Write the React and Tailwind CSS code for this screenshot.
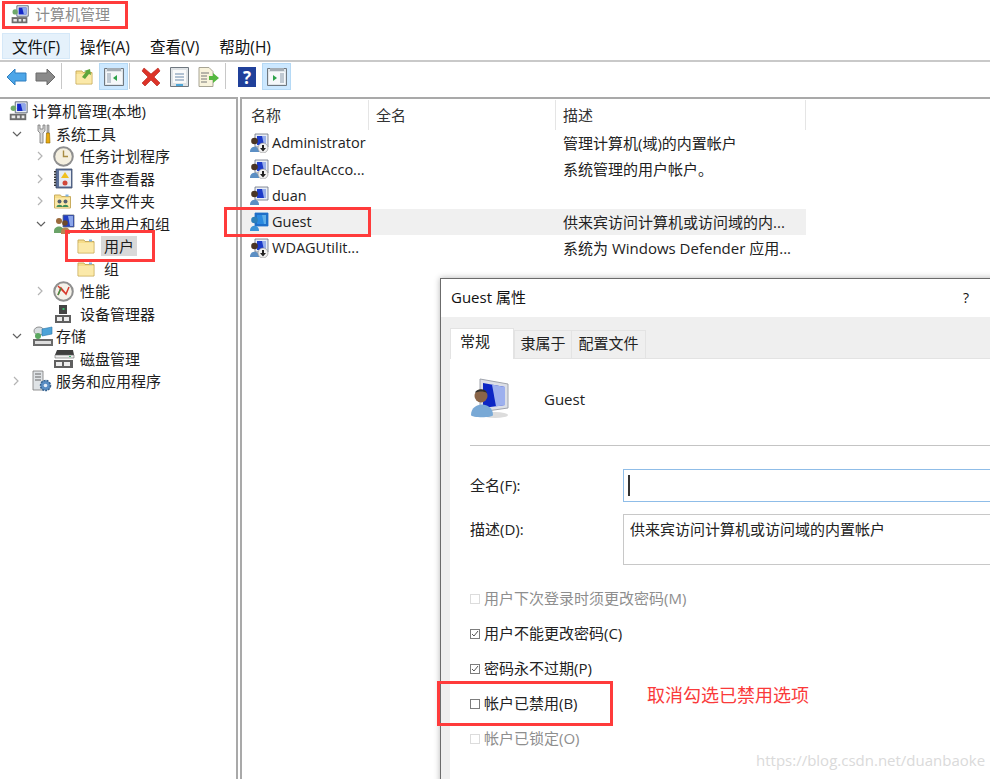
import React from "react";

const FONT = { fontFamily: '"Open Sans","Noto Sans CJK SC",sans-serif' };

function Computer({ size = 24, accent = "#1428c8" }) {
  return (
    <svg width={size} height={size} viewBox="0 0 24 24">
      <path d="M9 2h13v12H9z" fill="#e8edf5" stroke="#5a6472" strokeWidth="1" />
      <path d="M11 4h9v8h-9z" fill={accent} />
      <path d="M15 4h5v8h-3z" fill="#8fa8ea" />
      <circle cx="7" cy="9" r="3" fill="#6ea86a" />
      <path d="M3 15h18v7H3z" fill="#6d6d6d" />
      <path d="M5 17h4v3H5zM11 17h3v3h-3zM16 17h3v3h-3z" fill="#e8e8e8" />
    </svg>
  );
}
function Tools() {
  return (
    <svg width="22" height="22" viewBox="0 0 22 22">
      <path d="M6 2v6l2 2v10h3V10l2-2V2l-2 0v4H8V2z" fill="#d8d8d8" stroke="#777" strokeWidth="0.8" />
      <path d="M15 2h2v8h-2z" fill="#bbb" stroke="#777" strokeWidth="0.6" />
      <path d="M14.500 10h3l.5 10h-4z" fill="#e8a90e" stroke="#8a6400" strokeWidth="0.6" />
    </svg>
  );
}
function Clock() {
  return (
    <svg width="21" height="21" viewBox="0 0 21 21">
      <circle cx="10.500" cy="10.500" r="9.300" fill="#f4efdf" stroke="#8f8f8f" strokeWidth="2" />
      <path d="M10.500 4.500v6h4.500" fill="none" stroke="#a88c42" strokeWidth="1.400" />
    </svg>
  );
}
function LogBook() {
  return (
    <svg width="21" height="21" viewBox="0 0 21 21">
      <path d="M3 1h16v19H3z" fill="#5b6f98" stroke="#3e4c68" strokeWidth="0.8" />
      <path d="M6 2.500h12v16H6z" fill="#e6ebf3" />
      <path d="M2 3v15" stroke="#333" strokeWidth="2" strokeDasharray="1.500 1.200" />
      <path d="M12 4l4 6H8z" fill="#f0c020" />
      <circle cx="12" cy="15" r="2.500" fill="#d0473a" />
    </svg>
  );
}
function FolderSvg({ width = 18, share = false, tilt = false }) {
  return (
    <svg width={width} height="18" viewBox="0 0 18 18">
      <path d="M1 3h6l1 1.500h9V16H1z" fill="#f6dd8a" stroke="#c9ad5f" strokeWidth="1" />
      <path d="M1.500 6h15v9.500h-15z" fill="#fbe9a9" />
      <path d="M12 2.500h3v2h-3z" fill="#7fb2e0" />
      {share && (
        <g>
          <circle cx="6" cy="9.500" r="2" fill="#54606e" />
          <circle cx="12" cy="9.500" r="2" fill="#54606e" />
          <path d="M3 15c0-3 6-3 6 0zM9 15c0-3 6-3 6 0z" fill="#3f8d58" />
        </g>
      )}
      {tilt && <path d="M7 9l4-5-2-1 6-2 1 6-2-1-4 5z" fill="#5da53c" />}
    </svg>
  );
}
function Users() {
  return (
    <svg width="22" height="22" viewBox="0 0 22 22">
      <path d="M10 2h11v12H10z" fill="#223fc4" stroke="#66707c" strokeWidth="0.8" />
      <path d="M15 3h5v10h-3z" fill="#8ba6ea" />
      <circle cx="6" cy="8" r="3" fill="#9b6a3c" />
      <path d="M1 18c0-6 10-6 10 0v2H1z" fill="#6aa368" />
      <circle cx="12" cy="10" r="2.800" fill="#6d4a2a" />
      <path d="M8 19c0-6 9-6 9 0v2H8z" fill="#b9844e" />
    </svg>
  );
}
function Gauge() {
  return (
    <svg width="21" height="21" viewBox="0 0 21 21">
      <circle cx="10.500" cy="10.500" r="9.300" fill="#f4f2ea" stroke="#8f8f8f" strokeWidth="2" />
      <path d="M5 5l7 7M5 14l3-7 5 6 3-7" fill="none" stroke="#d8392c" strokeWidth="1.500" />
      <path d="M5 14l3-7" stroke="#3d9448" strokeWidth="1.500" />
    </svg>
  );
}
function Device() {
  return (
    <svg width="20" height="20" viewBox="0 0 20 20">
      <path d="M6 1h8v9H6z" fill="#444" />
      <path d="M9.500 4h2v2h-2z" fill="#38b86b" />
      <path d="M2 11h16v8H2z" fill="#5f5f5f" />
      <path d="M4 13h5v4H4zM11 13h5v4h-5z" fill="#ececec" />
    </svg>
  );
}
function Storage() {
  return (
    <svg width="22" height="22" viewBox="0 0 22 22">
      <ellipse cx="7" cy="6" rx="5" ry="4" fill="#d8dde0" stroke="#777" strokeWidth="0.8" />
      <path d="M10 4l10-2v7l-10 2z" fill="#4da3d8" stroke="#2c76a8" strokeWidth="0.6" />
      <circle cx="6" cy="11" r="3" fill="#5aa860" />
      <path d="M1 14h20v7H1z" fill="#6a6a6a" />
      <path d="M3 16h16v3H3z" fill="#dedede" />
    </svg>
  );
}
function Disk() {
  return (
    <svg width="22" height="20" viewBox="0 0 22 20">
      <path d="M4 1h16l1 5H2z" fill="#3f3f3f" />
      <path d="M2 6h19v3H2z" fill="#efefef" stroke="#666" strokeWidth="0.6" />
      <path d="M16 7h2v1h-2z" fill="#38b86b" />
      <path d="M1 11h19v8H1z" fill="#5f5f5f" />
      <path d="M3 13h6v4H3zM11 13h6v4h-6z" fill="#ececec" />
    </svg>
  );
}
function Services() {
  return (
    <svg width="20" height="22" viewBox="0 0 20 22">
      <path d="M1 1h10v19H1z" fill="#dfe3e6" stroke="#7a7a7a" strokeWidth="0.8" />
      <path d="M3 4h6M3 7h6M3 10h6" stroke="#666" strokeWidth="1.200" />
      <circle cx="13.500" cy="15.500" r="5" fill="#5a8ec4" stroke="#33618f" strokeWidth="1.500" strokeDasharray="2 1" />
      <circle cx="13.500" cy="15.500" r="1.800" fill="#e5eef7" />
    </svg>
  );
}
function ListUser({ blue = false, arrow = true }) {
  return (
    <svg width="20" height="20" viewBox="0 0 20 20">
      <path d="M6 1h13v13H6z" fill={blue ? "#1f6fc8" : "#e8edf5"} stroke={blue ? "#1f6fc8" : "#6b7280"} strokeWidth="0.8" />
      <path d="M8 3h9v9H8z" fill={blue ? "#2a8ae0" : "#1d3bc8"} />
      <path d="M13 3h4v9h-2z" fill={blue ? "#5eaee8" : "#9ab0ea"} />
      <circle cx="5.500" cy="8" r="3.300" fill={blue ? "#2d7fb8" : "#4a3524"} />
      <path d="M1 19c-.5-7 9.500-7 9 0z" fill={blue ? "#3c93d6" : "#5c8fc4"} />
      {arrow && (
        <g>
          <circle cx="14" cy="15" r="5" fill="#f0f0f0" stroke="#888" strokeWidth="0.6" />
          <path d="M13 12h2v3h2l-3 3.500L11 15h2z" fill="#222" />
        </g>
      )}
    </svg>
  );
}
function BigUser() {
  return (
    <svg width="42" height="42" viewBox="0 0 42 42">
      <path d="M10 1l28 5v24l-28 4z" fill="#dcdfe6" stroke="#a0a4ad" strokeWidth="1" />
      <path d="M13 5l22 4v18l-22 3z" fill="#0c26c4" />
      <path d="M22 6.500l13 2.500v18l-9 1.500z" fill="#9db0ee" />
      <ellipse cx="25" cy="37" rx="13" ry="3" fill="#dcdcdc" />
      <circle cx="11" cy="18" r="6.500" fill="#8a6548" />
      <path d="M5 15c1-5 11-5 12 0-3-2-9-2-12 0z" fill="#33322f" />
      <path d="M1 37c0-14 22-14 22 0 0 3-22 3-22 0z" fill="#79a9d6" />
    </svg>
  );
}
function ChevronRight() {
  return (
    <svg width="8" height="10" viewBox="0 0 8 10">
      <path d="M2 1l4 4-4 4" fill="none" stroke="#b4b4b4" strokeWidth="1.200" />
    </svg>
  );
}
function ChevronDown() {
  return (
    <svg width="10" height="8" viewBox="0 0 10 8">
      <path d="M1 2l4 4 4-4" fill="none" stroke="#606060" strokeWidth="1.200" />
    </svg>
  );
}

function ArrowIcon({ color, dark, flip }) {
  return (
    <svg width="21" height="18" viewBox="0 0 21 18" className={flip ? "-scale-x-100" : ""}>
      <path d="M1 9l8-8v4h11v8H9v4z" fill={color} stroke={dark} strokeWidth="1" />
    </svg>
  );
}
function PaneIcon({ right = false }) {
  return (
    <svg width="20" height="20" viewBox="0 0 20 20">
      <path d="M.5 1.500h19v17H.5z" fill="#dfe5ea" stroke="#6f7880" />
      <path d="M2 5h16v12H2z" fill="#f6f8fa" />
      <path d="M3 1h14v3H3z" fill="#a5adb4" />
      <path d={right ? "M13 6h4v10h-4z" : "M3 6h4v10H3z"} fill="#c0c9d2" />
      <path d={right ? "M6 8l4 3-4 3z" : "M13 8l-4 3 4 3z"} fill="#2da24a" />
    </svg>
  );
}

function TreeRow({ level, chevron, icon, label, selected }) {
  const levels = {
    0: "pl-[7px]",
    1: "pl-[11px]",
    2: "pl-[35px]",
    3: "pl-[77px]",
  };
  return (
    <div className={`flex h-[22.500px] items-center ${levels[level]}`}>
      {level > 0 && level < 3 && (
        <span className="flex w-[21px] shrink-0 items-center justify-start pl-[1px]">
          {chevron === "down" && <ChevronDown />}
          {chevron === "right" && <ChevronRight />}
        </span>
      )}
      <span className={`flex w-[24px] shrink-0 items-center ${level === 2 ? "-ml-[3px] mr-[3px]" : ""}`}>{icon}</span>
      <span className={`whitespace-nowrap text-[15px] leading-[20px] text-[#1e1e1e] ${level === 0 ? "pl-[1px]" : ""} ${selected ? "bg-[#d9d9d9] px-[3px]" : level === 3 ? "px-[3px]" : ""}`}>
        {label}
      </span>
    </div>
  );
}

const tree = [
  { level: 0, icon: <Computer size={22} />, label: "计算机管理(本地)" },
  { level: 1, chevron: "down", icon: <Tools />, label: "系统工具" },
  { level: 2, chevron: "right", icon: <Clock />, label: "任务计划程序" },
  { level: 2, chevron: "right", icon: <LogBook />, label: "事件查看器" },
  { level: 2, chevron: "right", icon: <FolderSvg width={19} share />, label: "共享文件夹" },
  { level: 2, chevron: "down", icon: <Users />, label: "本地用户和组" },
  { level: 3, icon: <FolderSvg />, label: "用户", selected: true },
  { level: 3, icon: <FolderSvg />, label: "组" },
  { level: 2, chevron: "right", icon: <Gauge />, label: "性能" },
  { level: 2, icon: <Device />, label: "设备管理器" },
  { level: 1, chevron: "down", icon: <Storage />, label: "存储" },
  { level: 2, icon: <Disk />, label: "磁盘管理" },
  { level: 1, chevron: "right", icon: <Services />, label: "服务和应用程序" },
];

const users = [
  { name: "Administrator", desc: "管理计算机(域)的内置帐户", arrow: true },
  { name: "DefaultAcco...", desc: "系统管理的用户帐户。", arrow: true },
  { name: "duan", desc: "", arrow: false },
  { name: "Guest", desc: "供来宾访问计算机或访问域的内...", selected: true },
  { name: "WDAGUtilit...", desc: "系统为 Windows Defender 应用...", arrow: true },
];

function Check({ state, label, disabled }) {
  return (
    <div className="flex h-[35px] items-center">
      <span className={`mr-[4px] flex h-[10px] w-[10px] items-center justify-center border ${disabled ? "border-[#dcdcdc]" : "border-[#7d7d7d]"}`}>
        {state && (
          <svg width="8" height="8" viewBox="0 0 8 8">
            <path d="M1 4l2 2 4-5" fill="none" stroke="#555" strokeWidth="1" />
          </svg>
        )}
      </span>
      <span className={`whitespace-nowrap text-[15px] ${disabled ? "text-[#8e8e8e]" : "text-[#222]"}`}>{label}</span>
    </div>
  );
}

export default function App() {
  return (
    <div className="relative h-[779px] w-[990px] overflow-hidden bg-white" style={FONT}>
      {/* title */}
      <div className="flex h-[33px] items-center pb-[4px] pl-[9px]">
        <Computer size={21} />
        <span className="ml-[5px] text-[15px] text-[#8c8c8c]">计算机管理</span>
      </div>
      {/* menu */}
      <div className="flex h-[29px] border-b-2 border-[#c9c9c9] pb-[1px] pl-[2px] text-[15.500px] text-[#111]">
        <div className="flex w-[68px] items-center justify-center border border-[#d5e8f8] bg-[#e5f1fb] pt-[3px]">文件(F)</div>
        <div className="ml-[10px] flex items-center pt-[3px]">操作(A)</div>
        <div className="ml-[20px] flex items-center pt-[3px]">查看(V)</div>
        <div className="ml-[20px] flex items-center pt-[3px]">帮助(H)</div>
      </div>
      {/* toolbar */}
      <div className="flex h-[35px] items-start pl-[6px] pt-[1px]">
        <div className="flex h-[28px] items-center"><ArrowIcon color="#4da6e8" dark="#2f7fc0" /></div>
        <div className="ml-[8px] flex h-[28px] items-center"><ArrowIcon color="#8a8a8a" dark="#6a6a6a" flip /></div>
        <div className="ml-[5px] h-[26px] w-px bg-[#c8c8c8]" />
        <div className="ml-[13px] flex h-[28px] items-center"><FolderSvg tilt /></div>
        <div className="ml-[6px] flex h-[27px] w-[29px] items-center justify-center border border-[#b5d9f5] bg-[#cce8ff]"><PaneIcon /></div>
        <div className="ml-[1px] h-[26px] w-px bg-[#c8c8c8]" />
        <div className="ml-[11px] flex h-[28px] items-center">
          <svg width="20" height="20" viewBox="0 0 20 20">
            <path d="M3 1l7 6 7-6 2 3-6 6 6 6-3 3-6-6-6 6-3-3 6-6-6-6z" fill="#dd3328" stroke="#b02018" strokeWidth="0.6" />
          </svg>
        </div>
        <div className="ml-[9px] flex h-[28px] items-center">
          <svg width="19" height="20" viewBox="0 0 19 20">
            <path d="M.5 .5h18v19H.5z" fill="#dfe3e6" stroke="#6f7880" />
            <path d="M3 3h13v13H3z" fill="#fafafa" />
            <path d="M5 7h9M5 10h9M5 13h9" stroke="#6a89aa" />
            <path d="M6 17h7v2H6z" fill="#4da6d8" />
          </svg>
        </div>
        <div className="ml-[9px] flex h-[28px] items-center">
          <svg width="21" height="20" viewBox="0 0 21 20">
            <path d="M1 .5h10l4 4v15H1z" fill="#f8f3dc" stroke="#a8a594" />
            <path d="M3 6h8M3 9h6M3 12h6M3 15h6" stroke="#777" />
            <path d="M11 9h4V6l6 5-6 5v-3h-4z" fill="#55b83f" />
          </svg>
        </div>
        <div className="ml-[6px] h-[26px] w-px bg-[#c8c8c8]" />
        <div className="ml-[12px] flex h-[28px] items-center">
          <span className="flex h-[20px] w-[18px] items-center justify-center bg-[#20409a] text-[17px] font-bold leading-none text-white">?</span>
        </div>
        <div className="ml-[6px] flex h-[27px] w-[29px] items-center justify-center border border-[#b5d9f5] bg-[#cce8ff]"><PaneIcon right /></div>
      </div>
      {/* panes */}
      <div className="flex h-[682px] gap-[2px]">
        <div className="h-full w-[238px] shrink-0 border-2 border-b-0 border-l-0 border-[#a9a9a9] pt-[1px]">
          {tree.map((t) => (
            <TreeRow key={t.label} {...t} />
          ))}
        </div>
        <div className="h-full flex-1 border-l-2 border-t-2 border-[#a9a9a9] pt-[1px]">
          <div className="flex h-[30px] w-[564px] text-[15px] text-[#333]">
            <div className="flex w-[127px] items-center border-r border-[#e5e5e5] pl-[9px]">名称</div>
            <div className="flex w-[187px] items-center border-r border-[#e5e5e5] pl-[7px]">全名</div>
            <div className="flex w-[250px] items-center border-r border-[#e5e5e5] pl-[7px]">描述</div>
          </div>
          {users.map((u) => (
            <div key={u.name} className={`flex h-[26.250px] w-[564px] items-center text-[15px] text-[#222] ${u.selected ? "bg-[#f0f0f0]" : ""}`}>
              <div className="flex w-[127px] items-center pl-[7px]">
                <ListUser blue={u.selected} arrow={u.arrow !== false && !u.selected} />
                <span className="ml-[3px] whitespace-nowrap text-[14.500px]">{u.name}</span>
              </div>
              <div className="w-[187px]" />
              <div className="whitespace-nowrap pl-[7px] text-[15px]">{u.desc}</div>
            </div>
          ))}
        </div>
      </div>

      {/* dialog */}
      <div className="absolute left-[440px] top-[278px] h-[510px] w-[560px] border border-[#6b6b6b] bg-[#efefef] shadow-[0_0_6px_rgba(0,0,0,0.3)]">
        <div className="flex h-[38px] items-center justify-between bg-white pb-[2px] pl-[10px] pr-[30px] text-[15px] text-[#111]">
          <span>Guest 属性</span>
          <span className="text-[14px]">?</span>
        </div>
        <div className="flex h-[41px] items-end pl-[9px] text-[15px] text-[#222]">
          <div className="z-10 -mb-[1px] flex h-[31px] w-[64px] items-center border border-b-0 border-[#e3e3e3] bg-white pb-[6px] pl-[9px]">常规</div>
          <div className="flex h-[28px] w-[58px] items-center justify-center border border-b-0 border-[#e3e3e3] pb-[2px]">隶属于</div>
          <div className="flex h-[28px] w-[74px] items-center justify-center border border-b-0 border-l-0 border-[#e3e3e3] pb-[2px]">配置文件</div>
        </div>
        <div className="ml-[9px] h-[430px] border-t border-[#e3e3e3] bg-white pl-[20px] text-[#222]">
          <div className="flex h-[87px] items-center border-b border-[#c4c4c4]">
            <span className="-mt-[7px] block w-[74px]"><BigUser /></span>
            <span className="-mt-[5px] text-[15px]">Guest</span>
          </div>
          <div className="mt-[23px] flex h-[32px] items-center text-[15px]">
            <span className="w-[153px]">全名(F):</span>
            <div className="flex h-[33px] flex-1 items-center border border-[#8fbde8] pl-[4px]">
              <span className="h-[21px] w-[2px] bg-[#333]" />
            </div>
          </div>
          <div className="mt-[13px] flex h-[51px] text-[15px]">
            <span className="flex h-[30px] w-[153px] items-center">描述(D):</span>
            <div className="flex-1 border border-[#c8c8c8] pl-[6px] pt-[3px] text-[15px]">供来宾访问计算机或访问域的内置帐户</div>
          </div>
          <div className="mt-[16px]">
            <Check disabled label="用户下次登录时须更改密码(M)" />
            <Check state label="用户不能更改密码(C)" />
            <Check state label="密码永不过期(P)" />
            <Check label="帐户已禁用(B)" />
            <Check disabled label="帐户已锁定(O)" />
          </div>
        </div>
      </div>

      {/* annotations */}
      <div className="absolute left-[2px] top-[1px] h-[28px] w-[126px] border-[3px] border-[#ff3b3b]" />
      <div className="absolute left-[65px] top-[230px] h-[32px] w-[90px] border-[3px] border-[#ff3b3b]" />
      <div className="absolute left-[224px] top-[207px] h-[30px] w-[147px] border-[3px] border-[#ff3b3b]" />
      <div className="absolute left-[437px] top-[681px] h-[45px] w-[176px] border-[3px] border-[#ff3b3b]" />
      <div className="absolute left-[647px] top-[683px] whitespace-nowrap text-[18px] leading-[25px] text-[#fa3a3a]">取消勾选已禁用选项</div>
      <div className="absolute left-[756px] top-[750px] whitespace-nowrap text-[15px] leading-[20px] text-[#dadada]">https://blog.csdn.net/duanbaoke</div>
    </div>
  );
}
